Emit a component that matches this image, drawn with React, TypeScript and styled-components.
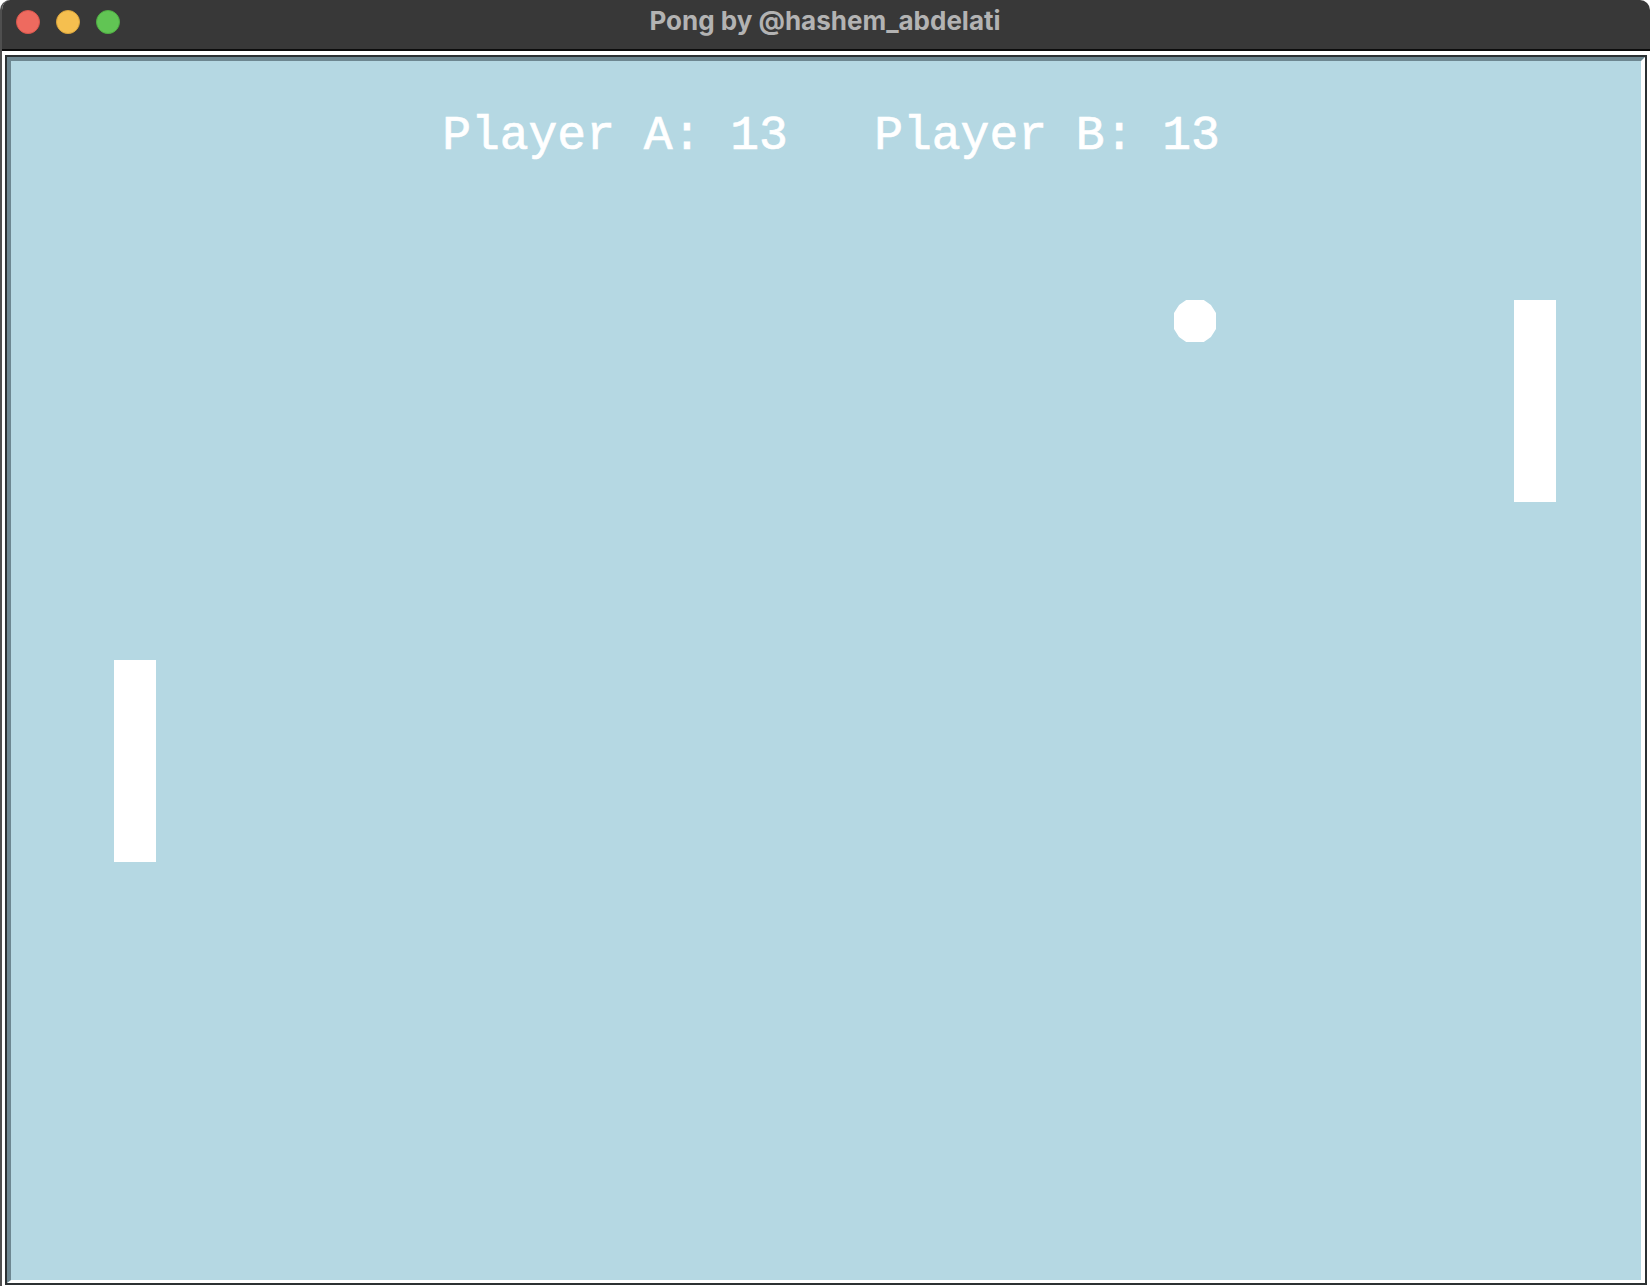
import React from 'react';
import styled, { createGlobalStyle } from 'styled-components';

const GlobalStyle = createGlobalStyle`
  html, body {
    margin: 0;
    padding: 0;
    background: #ffffff;
    overflow: hidden;
  }
  #root {
    width: 1650px;
    height: 1286px;
  }
`;

const Window = styled.div`
  width: 1650px;
  height: 1286px;
  box-sizing: border-box;
  display: flex;
  flex-direction: column;
  background: #ffffff;
  border-left: 2px solid #4f4f4f;
  border-radius: 10px 10px 0 0;
  overflow: hidden;
`;

const TitleBar = styled.div`
  position: relative;
  height: 51px;
  box-sizing: border-box;
  padding-bottom: 7px;
  flex: none;
  display: flex;
  align-items: center;
  justify-content: center;
  background: #383838;
  border-bottom: 2px solid #0c0c0c;
`;

const Lights = styled.div`
  position: absolute;
  left: 14px;
  top: 10px;
  display: flex;
  gap: 16px;
`;

const Light = styled.span<{ $color: string; $edge: string }>`
  width: 24px;
  height: 24px;
  border-radius: 50%;
  box-sizing: border-box;
  background: ${(p) => p.$color};
  border: 1px solid ${(p) => p.$edge};
`;

const Title = styled.div`
  font-family: Inter, "Noto Sans", sans-serif;
  font-weight: 700;
  font-size: 26px;
  line-height: 30px;
  color: #b3b3b3;
  margin-left: -2px;
`;

const Body = styled.div`
  flex: 1;
  padding: 4px 3px 0 3px;
`;

// tk canvas: 2px highlight border plus sunken relief
const Frame = styled.div`
  border: 2px solid #2c3133;
`;

const Relief = styled.div`
  border-style: solid;
  border-width: 4px 4px 3px 4px;
  border-color: #6d8791 #ffffff #ffffff #6d8791;
`;

const Canvas = styled.div`
  position: relative;
  height: 1219px;
  background: #b5d8e3;
  overflow: hidden;
`;

const Score = styled.div`
  padding: 48px 0 0 10px;
  text-align: center;
  white-space: pre;
  font-family: "Liberation Mono", "Courier New", monospace;
  font-size: 48px;
  line-height: 54px;
  color: #ffffff;
  -webkit-text-stroke: 0.7px #ffffff;
`;

const Paddle = styled.div<{ $x: number; $y: number }>`
  position: absolute;
  left: ${(p) => p.$x}px;
  top: ${(p) => p.$y}px;
  width: 42px;
  height: 202px;
  background: #ffffff;
`;

const Ball = styled.div<{ $x: number; $y: number }>`
  position: absolute;
  left: ${(p) => p.$x}px;
  top: ${(p) => p.$y}px;
  width: 42px;
  height: 42px;
  background: #ffffff;
  clip-path: polygon(
    29% 0%, 71% 0%, 88% 12%, 100% 31%, 100% 69%, 88% 88%,
    71% 100%, 29% 100%, 12% 88%, 0% 69%, 0% 31%, 12% 12%
  );
`;

const App = () => {
  const scoreA = 13;
  const scoreB = 13;

  return (
    <>
      <GlobalStyle />
      <Window>
        <TitleBar>
          <Lights>
            <Light $color="#ee6a5f" $edge="#d9574d" />
            <Light $color="#f5bf4f" $edge="#d9a43c" />
            <Light $color="#61c554" $edge="#4fae43" />
          </Lights>
          <Title>Pong by @hashem_abdelati</Title>
        </TitleBar>
        <Body>
          <Frame>
            <Relief>
              <Canvas>
                <Score>{`Player A: ${scoreA}   Player B: ${scoreB}`}</Score>
                <Paddle $x={103} $y={599} />
                <Paddle $x={1503} $y={239} />
                <Ball $x={1163} $y={239} />
              </Canvas>
            </Relief>
          </Frame>
        </Body>
      </Window>
    </>
  );
};

export default App;
